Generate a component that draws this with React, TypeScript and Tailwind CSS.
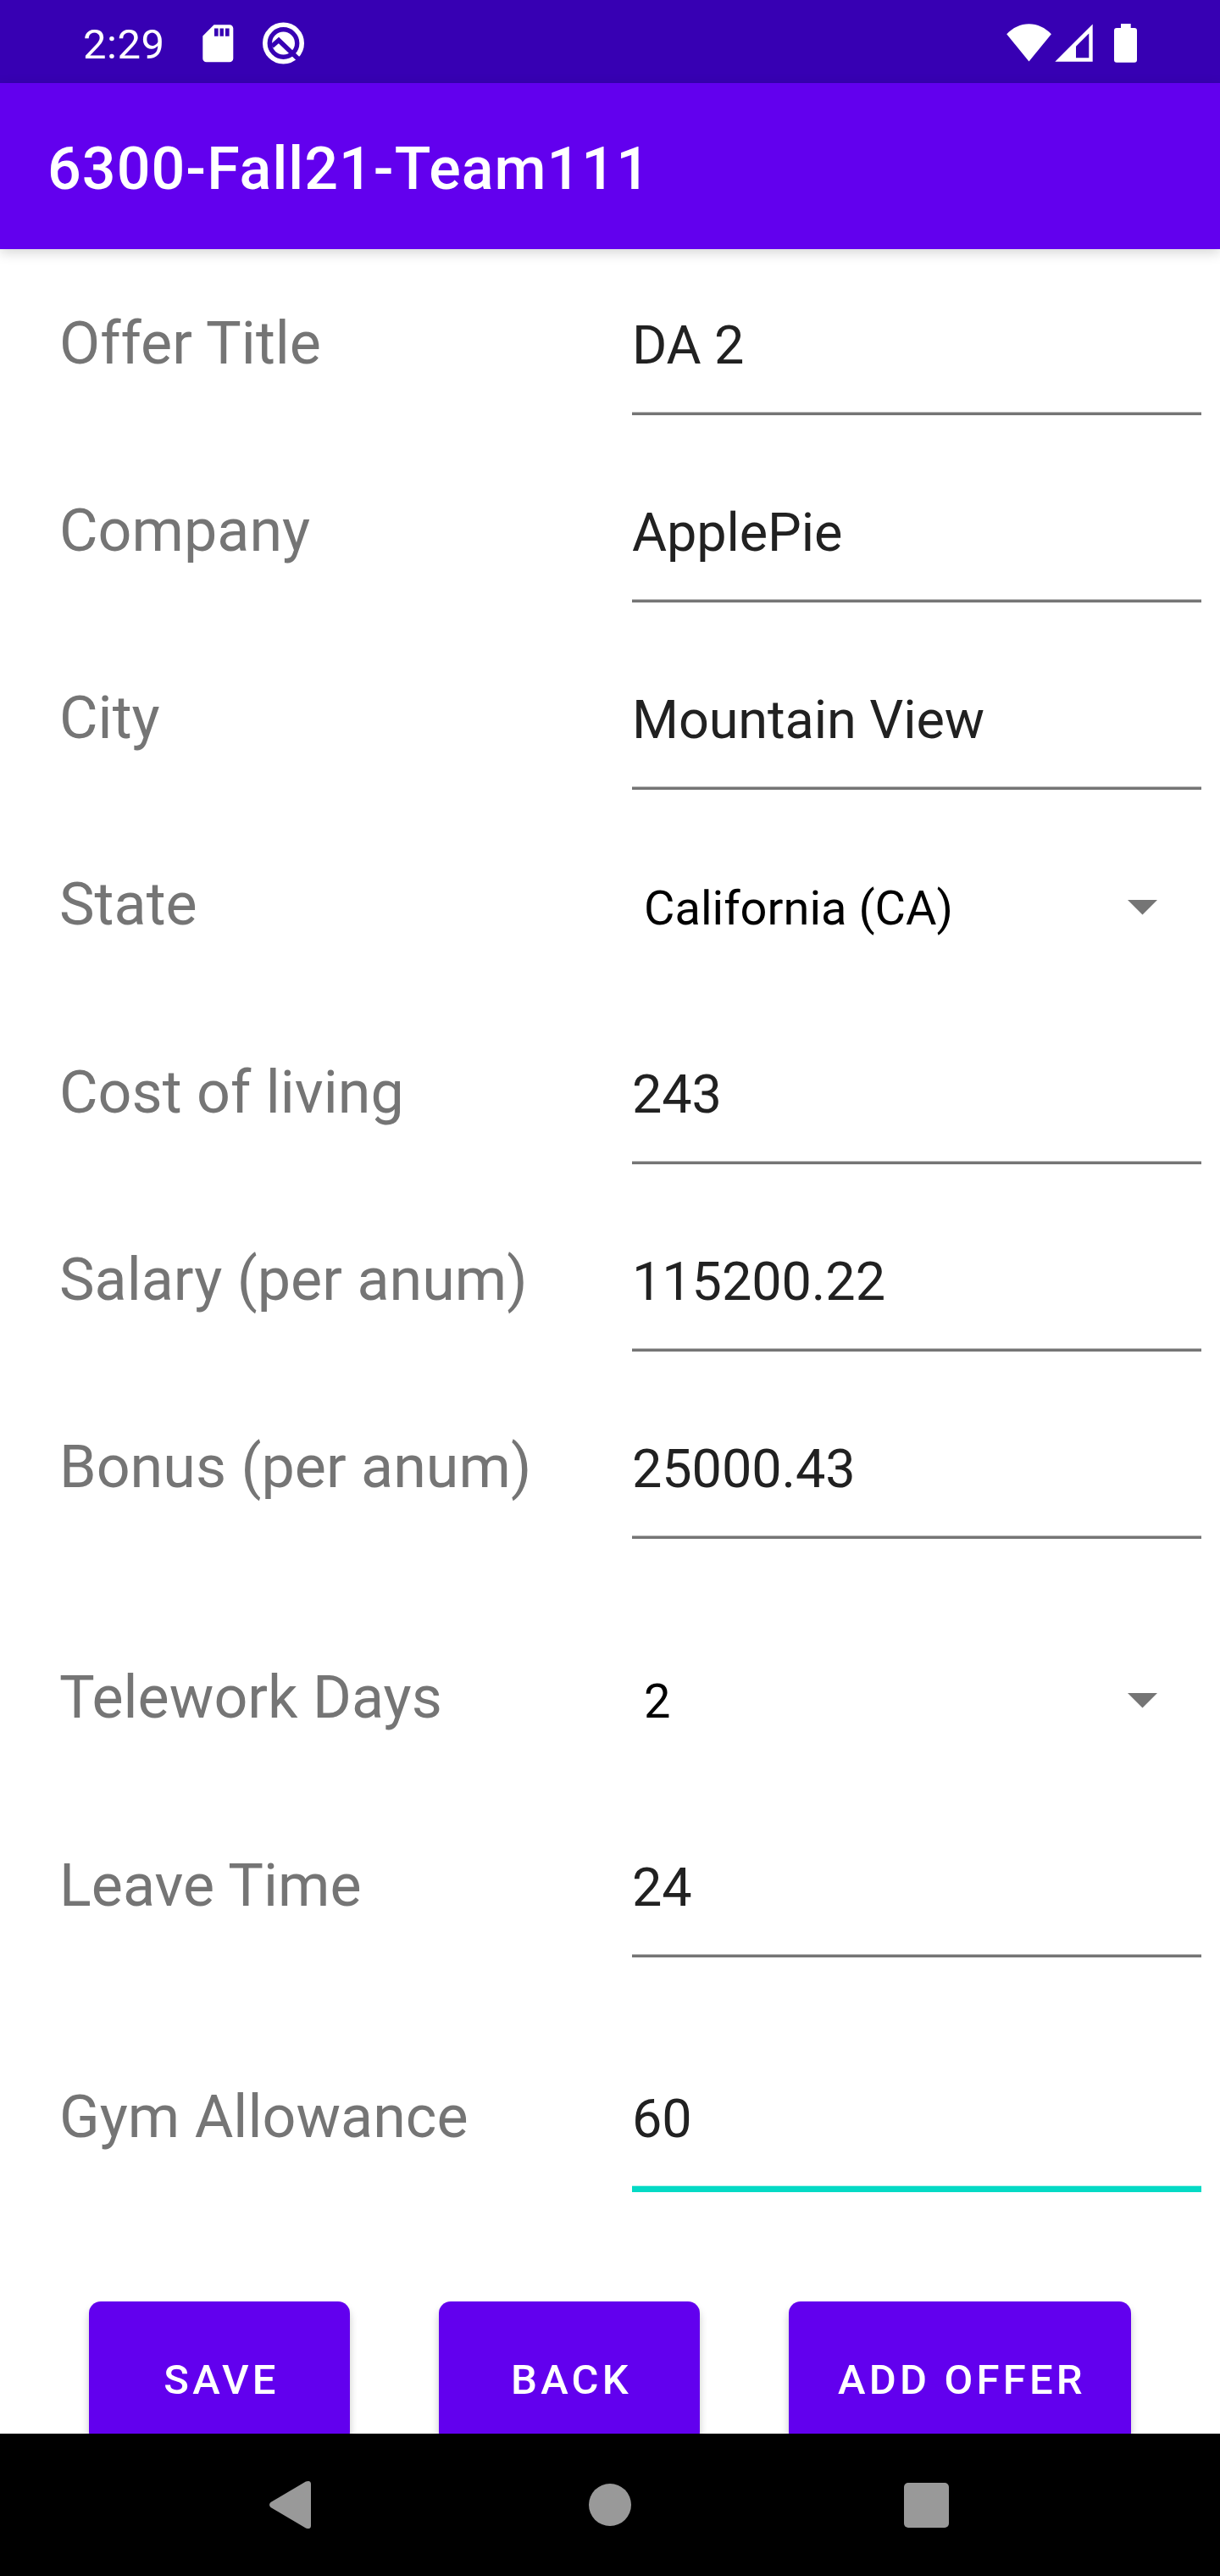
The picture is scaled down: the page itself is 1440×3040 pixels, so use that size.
import React from "react";

type Field = {
  label: string;
  value: string;
  kind: "text" | "select" | "focused";
  height: string;
};

const fields: Field[] = [
  { label: "Offer Title", value: "DA 2", kind: "text", height: "h-[221px]" },
  { label: "Company", value: "ApplePie", kind: "text", height: "h-[221px]" },
  { label: "City", value: "Mountain View", kind: "text", height: "h-[220px]" },
  { label: "State", value: "California (CA)", kind: "select", height: "h-[222px]" },
  { label: "Cost of living", value: "243", kind: "text", height: "h-[221px]" },
  { label: "Salary (per anum)", value: "115200.22", kind: "text", height: "h-[221px]" },
  { label: "Bonus (per anum)", value: "25000.43", kind: "text", height: "h-[272px]" },
  { label: "Telework Days", value: "2", kind: "select", height: "h-[222px]" },
  { label: "Leave Time", value: "24", kind: "text", height: "h-[273px]" },
  { label: "Gym Allowance", value: "60", kind: "focused", height: "h-[194px]" },
];

function StatusBar() {
  return (
    <div className="flex h-[98px] shrink-0 items-start bg-[#3700b3] pr-[98px] pl-[98px] text-white">
      <span className="mt-[24px] w-[141px] text-[49px] leading-[58px] tracking-[0.5px]">2:29</span>
      <svg className="mt-[29px] h-[45px] w-[37px]" viewBox="0 0 37 45" fill="currentColor">
        <path
          fillRule="evenodd"
          d="M13.500.2H32a4.300 4.300 0 0 1 4.300 4.300V40a4.300 4.300 0 0 1-4.300 4.300H4.600A4.300 4.300 0 0 1 .3 40V13.400ZM14 4.600V13.700h4.600V4.600ZM20.500 4.600V13.700h4.400V4.600ZM27 4.600V13.700h4.600V4.600Z"
        />
      </svg>
      <svg className="mt-[26px] ml-[34px] h-[50px] w-[50px]" viewBox="0 0 50 50" fill="none">
        <circle cx="24.500" cy="25" r="21.700" stroke="currentColor" strokeWidth="5.600" />
        <circle cx="24.500" cy="25" r="13.500" fill="currentColor" />
        <path d="M11 28.500 19 21.500 44 45.500" stroke="#3700b3" strokeWidth="5.500" />
      </svg>
      <div className="grow" />
      <svg className="mt-[28px] h-[45px] w-[54px]" viewBox="0 0 54 45" fill="currentColor">
        <path d="M26.500 44.500.2 12.300C7.500 4.500 16.500.2 26.500.2S45.500 4.500 52.900 12.300Z" />
      </svg>
      <svg className="mt-[28px] ml-[3px] h-[45px] w-[45px]" viewBox="0 0 45 45" fill="currentColor">
        <path fillRule="evenodd" d="M44.700.5V44.700H.3ZM40.300 11.500 25 26.800V40.300H40.300Z" />
      </svg>
      <svg className="mt-[28px] ml-[25px] h-[46px] w-[27px]" viewBox="0 0 27 46" fill="currentColor">
        <path d="M8 0H19.700V5H24a3 3 0 0 1 3 3V42.700a3 3 0 0 1-3 3H3a3 3 0 0 1-3-3V8A3 3 0 0 1 3 5H8Z" />
      </svg>
    </div>
  );
}

function FormRow({ label, value, kind, height }: Field) {
  return (
    <div className={`flex items-baseline pt-[70px] pl-[70px] ${height}`}>
      <label className="w-[676px] text-[70px] leading-[82px] tracking-[0.03px] whitespace-nowrap text-[#757575]">
        {label}
      </label>
      {kind === "select" ? (
        <div className="flex w-[672px] items-center pl-[14px]">
          <span className="grow text-[56px] leading-[66px] text-black">{value}</span>
          <svg className="mr-[52px] mb-[2px] h-[18px] w-[35px]" viewBox="0 0 35 18" fill="#757575">
            <path d="M0 0H35L17.500 17.500Z" />
          </svg>
        </div>
      ) : (
        <div className="flex w-[672px] flex-col">
          <span className="text-[63px] leading-[74px] tracking-[-0.1px] text-[#212121]">{value}</span>
          {kind === "focused" ? (
            <div className="mt-[41px] h-[8px] border-t border-[#b2f4ec] bg-[#03dac5]" />
          ) : (
            <div className="mt-[41px] h-[4px] border-t border-[#b9b9b9] bg-[#757575]" />
          )}
        </div>
      )}
    </div>
  );
}

function ActionButton({ children, width }: { children: string; width: string }) {
  return (
    <button
      className={`flex h-[168px] items-center justify-center rounded-[14px] bg-[#6200ee] pt-[18px] pl-[5px] text-[49px] leading-[58px] font-medium tracking-[0.086em] whitespace-nowrap text-white shadow-[0_7px_10px_rgba(0,0,0,0.22)] ${width}`}
    >
      {children}
    </button>
  );
}

export default function App() {
  return (
    <div className="flex h-[3040px] w-[1440px] flex-col overflow-hidden bg-white font-['Roboto',sans-serif]">
      <StatusBar />
      <header className="z-10 flex h-[196px] shrink-0 items-center bg-[#6200ee] pl-[56px] shadow-[0_4px_14px_rgba(0,0,0,0.17)]">
        <h1 className="mt-[6px] text-[70px] leading-[82px] font-medium tracking-[1.05px] text-white">
          6300-Fall21-Team111
        </h1>
      </header>
      <main className="h-[2578px] shrink-0 overflow-hidden">
        {fields.map((field) => (
          <FormRow key={field.label} {...field} />
        ))}
        <div className="mt-[135px] flex gap-[105px] pl-[105px]">
          <ActionButton width="w-[308px]">SAVE</ActionButton>
          <ActionButton width="w-[308px]">BACK</ActionButton>
          <ActionButton width="w-[404px]">ADD OFFER</ActionButton>
        </div>
      </main>
      <nav className="flex h-[168px] shrink-0 items-center bg-black pl-[318px] text-[#999999]">
        <svg className="h-[58px] w-[49px]" viewBox="0 0 49 58" fill="currentColor">
          <path d="M1.500 26 43 1.500Q48.500-.5 49 4V54Q48.500 58.500 43 56.500L1.500 32Q-1.500 29 1.500 26Z" />
        </svg>
        <div className="ml-[328px] size-[50px] rounded-full bg-[#999999]" />
        <div className="ml-[322px] size-[53px] rounded-[5px] bg-[#999999]" />
      </nav>
    </div>
  );
}
